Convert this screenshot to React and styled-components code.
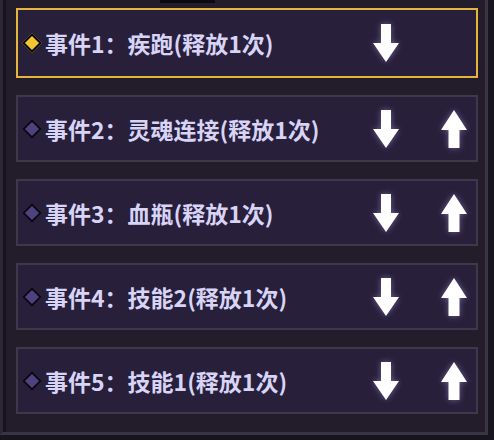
import styled, { createGlobalStyle } from "styled-components";

const GlobalStyle = createGlobalStyle`
  html, body {
    margin: 0;
    padding: 0;
    background: #19151f;
  }
  body {
    font-family: "Noto Sans CJK SC", "Noto Sans", sans-serif;
  }
`;

const Panel = styled.div`
  width: 469px;
  height: 432px;
  padding-left: 13px;
  background: #221c2b;
  border-left: 3px solid #2c2737;
  border-right: 3px solid #3a3446;
  border-bottom: 3px solid #3a3446;
  box-shadow: inset 3px 0 0 #17131d;
`;

const TabMark = styled.div`
  width: 55px;
  height: 3px;
  margin-left: 144px;
  background: #0c0a10;
`;

const List = styled.div`
  display: flex;
  flex-direction: column;
  gap: 17px;
  padding-top: 5px;
  width: 462px;
`;

const Row = styled.div`
  display: flex;
  align-items: center;
  height: ${(p) => (p.$active ? 70 : 67)}px;
  box-sizing: border-box;
  padding: 0 9px 0 5px;
  background: #281f3b;
  border: 2px solid ${(p) => (p.$active ? "#e6b53d" : "#3e384b")};
`;

const Diamond = styled.span`
  display: block;
  width: 10px;
  height: 10px;
  margin: 0 6px 0 2px;
  transform: rotate(45deg);
  background: ${(p) => (p.$active ? "#f4c431" : "#4d4180")};
  border: 2.5px solid #0b0810;
  flex: 0 0 auto;
`;

const Label = styled.span`
  color: #d7d4f6;
  font-size: 23px;
  font-weight: 700;
  white-space: nowrap;
`;

const Controls = styled.div`
  margin-left: auto;
  display: flex;
  gap: 42px;
`;

const ArrowButton = styled.div`
  width: 26px;
  height: 38px;
  visibility: ${(p) => (p.$hidden ? "hidden" : "visible")};
  filter: drop-shadow(0 0 3px rgba(200, 180, 255, 0.45));

  svg {
    display: block;
  }
`;

const DownArrow = () => (
  <svg width="26" height="38" viewBox="0 0 26 38">
    <path d="M8 0 H18 V19 H26 L13 38 L0 19 H8 Z" fill="#ffffff" />
  </svg>
);

const UpArrow = () => (
  <svg width="26" height="38" viewBox="0 0 26 38">
    <path d="M13 0 L26 20 H18.5 V38 H7.5 V20 H0 Z" fill="#ffffff" />
  </svg>
);

const events = [
  "事件1：疾跑(释放1次)",
  "事件2：灵魂连接(释放1次)",
  "事件3：血瓶(释放1次)",
  "事件4：技能2(释放1次)",
  "事件5：技能1(释放1次)",
];

const App = () => {
  return (
    <>
      <GlobalStyle />
      <Panel>
        <TabMark />
        <List>
          {events.map((text, i) => (
            <Row key={text} $active={i === 0}>
              <Diamond $active={i === 0} />
              <Label>{text}</Label>
              <Controls>
                <ArrowButton>
                  <DownArrow />
                </ArrowButton>
                <ArrowButton $hidden={i === 0}>
                  <UpArrow />
                </ArrowButton>
              </Controls>
            </Row>
          ))}
        </List>
      </Panel>
    </>
  );
};

export default App;
